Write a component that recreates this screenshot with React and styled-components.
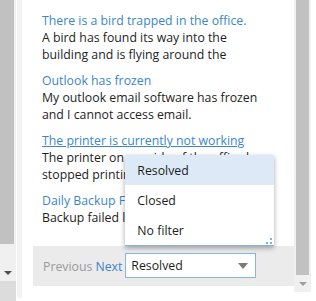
import styled, { createGlobalStyle } from 'styled-components';

const GlobalStyle = createGlobalStyle`
  html, body {
    margin: 0;
    padding: 0;
    background: #fff;
    overflow: hidden;
  }
  body {
    font-family: 'Open Sans', 'Noto Sans', sans-serif;
  }
`;

const Page = styled.div`
  display: flex;
  width: 316px;
  height: 301px;
  background: #fff;
`;

const Scrollbar = styled.div`
  display: flex;
  flex-direction: column;
  width: ${(p) => p.$width}px;
  height: ${(p) => p.$height}px;
  background: #f0f0f0;
  flex-shrink: 0;
`;

const Thumb = styled.div`
  height: ${(p) => p.$height}px;
  margin: 0 ${(p) => p.$right}px 0 ${(p) => p.$left}px;
  background: #c1c1c1;
`;

const Arrow = styled.div`
  display: flex;
  justify-content: center;
  align-items: center;
  height: 17px;
  margin-top: auto;
  &::after {
    content: '';
    border-left: 4px solid transparent;
    border-right: 4px solid transparent;
    border-top: 4px solid ${(p) => p.$color};
  }
`;

const LeftCol = styled.div`
  display: flex;
  flex-direction: column;
  width: 16px;
  flex-shrink: 0;
`;

const LeftFoot = styled.div`
  height: 20px;
  background: #dcdcdc;
`;

const Panel = styled.div`
  display: flex;
  margin-left: 1px;
  width: 278px;
  height: 298px;
  border-left: 5px solid #f3f3f3;
  background: #fff;
  flex-shrink: 0;
`;

const Content = styled.div`
  display: flex;
  flex-direction: column;
  width: 273px;
`;

const List = styled.ul`
  list-style: none;
  margin: 0;
  padding: 12px 0 0 20px;
  height: 246px;
  box-sizing: border-box;
  font-size: 12.3px;
  line-height: 17px;
`;

const Item = styled.li`
  margin-bottom: 9px;
  width: 228px;
`;

const Title = styled.a`
  display: block;
  color: #3b87c6;
  text-decoration: ${(p) => (p.$hover ? 'underline' : 'none')};
  white-space: nowrap;
`;

const Body = styled.div`
  color: #1e1e1e;
`;

const Footer = styled.div`
  display: flex;
  align-items: center;
  margin-left: 11px;
  width: 261px;
  height: 40px;
  padding-left: 10px;
  box-sizing: border-box;
  background: #ebebeb;
  font-size: 12.3px;
`;

const PageLink = styled.span`
  color: ${(p) => (p.$active ? '#3b87c6' : '#9a9a9a')};
  margin-right: 3px;
`;

const SelectWrap = styled.div`
  position: relative;
  margin-top: -1px;
`;

const Select = styled.div`
  display: flex;
  align-items: center;
  justify-content: space-between;
  width: 131px;
  height: 25px;
  box-sizing: border-box;
  padding: 0 7px 0 5px;
  border: 1px solid #86b4e3;
  background: #fff;
  color: #1e1e1e;
  &::after {
    content: '';
    border-left: 5px solid transparent;
    border-right: 5px solid transparent;
    border-top: 6px solid #7a7a7a;
  }
`;

const Popup = styled.div`
  position: absolute;
  left: 0;
  bottom: 32px;
  width: 149px;
  background: #fff;
  border-bottom: 1px solid #86b4e3;
  box-shadow: 0 2px 5px rgba(0, 0, 0, 0.35);
`;

const Option = styled.div`
  height: 30px;
  display: flex;
  align-items: center;
  padding-left: 12px;
  color: #1e1e1e;
  background: ${(p) => (p.$selected ? '#dde9f7' : '#fff')};
`;

const Grip = styled.svg`
  position: absolute;
  right: 2px;
  bottom: 1px;
`;

const items = [
  {
    title: 'There is a bird trapped in the office.',
    body: 'A bird has found its way into the building and is flying around the',
  },
  {
    title: 'Outlook has frozen',
    body: 'My outlook email software has frozen and I cannot access email.',
  },
  {
    title: 'The printer is currently not working',
    body: 'The printer on my side of the office has stopped printing.',
    hover: true,
  },
  { title: 'Daily Backup Failed', body: 'Backup failed last night.' },
];

export default function App() {
  return (
    <>
      <GlobalStyle />
      <Page>
        <LeftCol>
          <Scrollbar $width={16} $height={281}>
            <Thumb $height={244} $left={0} $right={2} />
            <Arrow $color="#505050" />
          </Scrollbar>
          <LeftFoot />
        </LeftCol>
        <Panel>
          <Content>
            <List>
              {items.map((it) => (
                <Item key={it.title}>
                  <Title $hover={it.hover}>{it.title}</Title>
                  <Body>{it.body}</Body>
                </Item>
              ))}
            </List>
            <Footer>
              <PageLink>Previous</PageLink>
              <PageLink $active>Next</PageLink>
              <SelectWrap>
                <Popup>
                  <Option $selected>Resolved</Option>
                  <Option>Closed</Option>
                  <Option>No filter</Option>
                  <Grip width="6" height="6" viewBox="0 0 6 6">
                    <rect x="4" y="0" width="2" height="2" fill="#7fb0e6" />
                    <rect x="0" y="4" width="2" height="2" fill="#7fb0e6" />
                    <rect x="4" y="4" width="2" height="2" fill="#7fb0e6" />
                  </Grip>
                </Popup>
                <Select>Resolved</Select>
              </SelectWrap>
            </Footer>
          </Content>
          <Scrollbar $width={17} $height={292}>
            <Thumb $height={275} $left={2} $right={2} />
            <Arrow $color="#a0a0a0" />
          </Scrollbar>
        </Panel>
      </Page>
    </>
  );
}
